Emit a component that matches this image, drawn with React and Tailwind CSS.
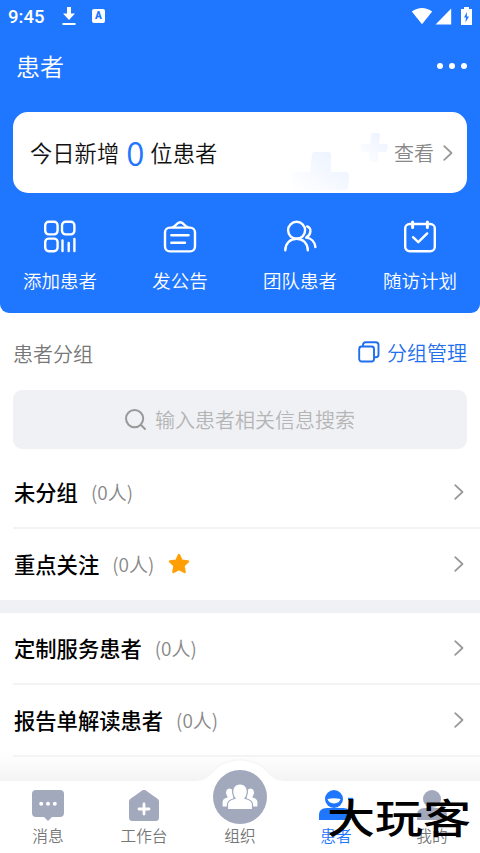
import React from 'react';

const groups = [
    { name: '未分组', count: 0 },
    { name: '重点关注', count: 0, starred: true },
];

const serviceGroups = [
    { name: '定制服务患者', count: 0 },
    { name: '报告单解读患者', count: 0 },
];

const Chevron = ({ className }) => (
    <svg width="12" height="18" viewBox="0 0 12 18" fill="none" stroke="currentColor" strokeWidth="1.8" strokeLinecap="round" strokeLinejoin="round" className={className}>
        <path d="M2.2 2.2L9.5 9L2.2 15.8" />
    </svg>
);

const QrIcon = () => (
    <svg width="34" height="34" viewBox="0 0 34 34" fill="none" stroke="white" strokeWidth="2.4" strokeLinecap="round">
        <rect x="2.2" y="1.8" width="12.4" height="12.6" rx="3.6" />
        <rect x="19" y="1.8" width="12.4" height="12.6" rx="3.6" />
        <rect x="2.2" y="18.6" width="12.4" height="12.6" rx="3.6" />
        <path d="M19.5 20.5V31M25.7 23V31M31.4 19V31" />
    </svg>
);

const NoticeIcon = () => (
    <svg width="34" height="34" viewBox="0 0 34 34" fill="none" stroke="white" strokeWidth="2.4" strokeLinecap="round" strokeLinejoin="round">
        <rect x="2" y="7.6" width="30" height="23.8" rx="4.8" />
        <path d="M10 7C13 6.6 13.5 2.2 17.2 2.2S21.4 6.6 24.4 7" />
        <path d="M8.3 15.3H25.6M8.3 22.8H22" />
    </svg>
);

const TeamIcon = () => (
    <svg width="34" height="34" viewBox="0 0 34 34" fill="none" stroke="white" strokeWidth="2.4" strokeLinecap="round" strokeLinejoin="round">
        <circle cx="13.6" cy="10.3" r="8.5" />
        <path d="M2.3 30.2C2.3 23.5 7 18.8 13.6 18.8S24.8 23.5 24.8 30.2" />
        <path d="M24.2 6.4C29 8.2 28.2 14.8 23.2 17.6C28.2 18.2 31.8 22 32.4 27" />
    </svg>
);

const PlanIcon = () => (
    <svg width="34" height="34" viewBox="0 0 34 34" fill="none" stroke="white" strokeWidth="2.4" strokeLinecap="round" strokeLinejoin="round">
        <rect x="2.2" y="4" width="29.6" height="27.2" rx="4.5" />
        <path d="M9.6 2V7.4M24.4 2V7.4" strokeWidth="3" />
        <path d="M10 17.2L15.3 22.2L24.2 13.4" />
    </svg>
);

const actions = [
    { label: '添加患者', icon: <QrIcon /> },
    { label: '发公告', icon: <NoticeIcon /> },
    { label: '团队患者', icon: <TeamIcon /> },
    { label: '随访计划', icon: <PlanIcon /> },
];

const StatusBar = () => (
    <div className="flex h-8 items-center justify-between pr-2 pl-2 text-white">
        <div className="flex items-center">
            <span className="w-[54px] pt-0.5 font-['Roboto',sans-serif] text-[18.5px] leading-none font-medium">9:45</span>
            <svg width="14" height="18" viewBox="0 0 14 18" fill="white">
                <path d="M5 0H9V6.5H13L7 13L1 6.5H5ZM0.5 16H13.5V18H0.5Z" />
            </svg>
            <span className="ml-4 flex h-[14px] w-[13px] items-center justify-center rounded-[2px] bg-white font-['Roboto',sans-serif] text-[10px] leading-none font-black text-[#1f76ff]">A</span>
        </div>
        <div className="flex items-center">
            <svg width="22" height="18" viewBox="0 0 22 18" fill="white">
                <path d="M0.8 4.6C7 -0.1 15 -0.1 21.2 4.6L11 17.2Z" />
            </svg>
            <svg width="17" height="18" viewBox="0 0 17 18" fill="white" className="ml-[2px]">
                <path d="M0.6 17.4L16.2 1.6V17.4Z" />
            </svg>
            <svg width="11" height="19" viewBox="0 0 11 19" className="ml-[9px]">
                <path d="M3 0H8V2H11V18H0V2H3Z" fill="white" />
                <path d="M6 5L3 10.5H5L4.4 15.5L8 9.4H5.8Z" fill="#1f76ff" />
            </svg>
        </div>
    </div>
);

const Header = () => (
    <header className="h-[313px] shrink-0 rounded-b-[9px] bg-[#1f76ff] text-white">
        <StatusBar />
        <div className="flex h-[68px] items-center justify-between pr-[13px] pl-4">
            <h1 className="text-[24px] leading-none font-[350]">患者</h1>
            <svg width="30" height="6" viewBox="0 0 30 6" fill="white">
                <circle cx="3" cy="3" r="3" />
                <circle cx="15" cy="3" r="3" />
                <circle cx="27" cy="3" r="3" />
            </svg>
        </div>
        <div className="relative mx-[13px] mt-3 flex h-[81px] items-center justify-between rounded-[15px] bg-white pr-[13px] pl-[17px]">
            <svg width="112" height="60" viewBox="0 0 112 60" className="absolute right-[79px] bottom-0">
                <defs>
                    <linearGradient id="cross" x1="1" y1="0" x2="0" y2="1">
                        <stop offset="0" stopColor="#eaf1ff" />
                        <stop offset="1" stopColor="#ffffff" />
                    </linearGradient>
                </defs>
                <path d="M36 22Q36 19 39 19H52Q55 19 55 22V39H70Q73 39 73 42L72 55Q72 57 69 57H16V39H34Z" fill="url(#cross)" />
                <path d="M95 1Q95 0 97 0H102Q104 0 104 2L103 11H110Q112 12 112 13L110 19H102V27Q102 29 100 29H95Q93 29 93 27V19H85V11H94Z" fill="url(#cross)" />
            </svg>
            <p className="relative flex items-center text-[22.3px] leading-none font-[350] whitespace-nowrap text-[#111]">
                今日新增
                <span className="mr-[6px] ml-[7px] text-[33px] leading-none font-[350] text-[#1f76ff]">0</span>
                位患者
            </p>
            <span className="relative flex items-center text-[20px] leading-none font-[350] text-[#888]">
                查看
                <Chevron className="ml-2 text-[#999]" />
            </span>
        </div>
        <div className="mt-[27px] grid grid-cols-4">
            {actions.map((action) => (
                <div key={action.label} className="flex flex-col items-center">
                    {action.icon}
                    <span className="mt-[17px] text-[18.5px] leading-none font-[350]">{action.label}</span>
                </div>
            ))}
        </div>
    </header>
);

const GroupRow = ({ group }) => (
    <li className="ml-[13px] flex h-[71.5px] items-center border-b-2 border-[#f3f3f5] pr-[15px] pl-px last:border-transparent">
        <span className="text-[21.3px] leading-none font-medium text-black">{group.name}</span>
        <span className="ml-[13px] flex items-center text-[19px] leading-none font-[350] text-[#888]">
            <span>(</span>
            <span>{group.count}</span>
            <span>人</span>
            <span>)</span>
        </span>
        {group.starred && (
            <svg width="22" height="22" viewBox="0 0 22 22" className="mt-0.5 ml-[14px]" fill="#ff9f05" stroke="#ff9f05" strokeWidth="2.4" strokeLinejoin="round">
                <path d="M11 2L13.7 7.7L20 8.4L15.5 12.7L16.6 19L11 16L5.4 19L6.5 12.7L2 8.4L8.3 7.7Z" />
            </svg>
        )}
        <Chevron className="mt-px ml-auto text-[#999]" />
    </li>
);

const MessageIcon = () => (
    <svg width="32" height="32" viewBox="0 0 32 32">
        <path d="M4 0H28Q32 0 32 4V23Q32 27 28 27H20L16 31L12 27H4Q0 27 0 23V4Q0 0 4 0Z" fill="#a2a9bd" />
        <circle cx="9.2" cy="13.8" r="2" fill="white" />
        <circle cx="16" cy="13.8" r="2" fill="white" />
        <circle cx="22.8" cy="13.8" r="2" fill="white" />
    </svg>
);

const WorkbenchIcon = () => (
    <svg width="32" height="32" viewBox="0 0 32 32">
        <path d="M14.5 0.2Q16 -0.8 17.5 0.2L29.5 8.8Q31 9.8 31 11.5V27.5Q31 31 27.5 31H4.5Q1 31 1 27.5V11.5Q1 9.8 2.5 8.8Z" fill="#a2a9bd" />
        <path d="M16 14V24M11 19H21" stroke="white" strokeWidth="2.8" strokeLinecap="round" />
    </svg>
);

const PatientIcon = () => (
    <svg width="34" height="32" viewBox="0 0 34 32">
        <path d="M0 30V25Q0 18 8 18H24Q32 18 32 25V30Z" fill="#1f76ff" />
        <circle cx="15" cy="9" r="9" fill="#1f76ff" />
        <path d="M8.5 9Q15 7.5 21.5 9Q20.5 13 15 13.5Q9.5 13 8.5 9Z" fill="white" />
        <path d="M29 8.8H34" stroke="#1f76ff" strokeWidth="2" />
    </svg>
);

const MineIcon = () => (
    <svg width="34" height="32" viewBox="0 0 34 32" fill="#a2a9bd">
        <circle cx="17" cy="9" r="9" />
        <path d="M2 30V25Q2 18 10 18H24Q32 18 32 25V30Z" />
    </svg>
);

const OrgIcon = () => (
    <svg width="54" height="54" viewBox="0 0 54 54" className="shrink-0">
        <circle cx="27" cy="27" r="27" fill="#a2a9bd" />
        <g fill="white" stroke="#a2a9bd" strokeWidth="1.2">
            <path d="M9 37V32Q9 28.5 14 27C9.5 20 16 15.5 20 19.5L22 37Z" />
            <path d="M45 37V32Q45 28.5 40 27C44.5 20 38 15.5 34 19.5L32 37Z" />
            <path d="M14.5 39.5V34Q15 30 22 28.5C17 21 20.5 14 27 14S37 21 32 28.5Q39 30 39.5 34V39.5Z" />
        </g>
    </svg>
);

const tabs = [
    { label: '消息', icon: <MessageIcon /> },
    { label: '工作台', icon: <WorkbenchIcon /> },
    { label: '组织', icon: <OrgIcon />, raised: true },
    { label: '患者', icon: <PatientIcon />, active: true },
    { label: '我的', icon: <MineIcon /> },
];

const TabBar = () => (
    <nav className="relative h-[72px] shrink-0 bg-white">
        {/* soft shade and the raised bump behind the middle tab */}
        <svg width="480" height="30" viewBox="0 0 480 30" className="absolute bottom-full left-0">
            <defs>
                <linearGradient id="shade" x1="0" y1="0" x2="0" y2="1">
                    <stop offset="0" stopColor="#f6f6f6" stopOpacity="0" />
                    <stop offset="1" stopColor="#f3f3f3" />
                </linearGradient>
            </defs>
            <rect width="480" height="30" fill="url(#shade)" />
            <path d="M196 30C207 30 210 24 216 18C230 6.5 250 6.5 264 18C270 24 273 30 284 30Z" fill="white" stroke="#f6f6f6" strokeWidth="3" />
            <path d="M196 30C207 30 210 24 216 18C230 6.5 250 6.5 264 18C270 24 273 30 284 30Z" fill="white" />
        </svg>
        <div className="relative grid h-full grid-cols-5 grid-rows-1">
            {tabs.map((tab) => (
                <div key={tab.label} className="flex min-h-0 flex-col items-center justify-end pb-[9px]">
                    {tab.icon}
                    <span className={`shrink-0 text-[15.7px] leading-none font-[350] ${tab.raised ? 'mt-[4px]' : 'mt-[6px]'} ${tab.active ? 'text-[#1f76ff]' : 'text-[#777]'}`}>{tab.label}</span>
                </div>
            ))}
        </div>
        <span className="absolute right-[9px] bottom-[17px] origin-bottom-right scale-y-[0.84] text-[48px] leading-none font-medium whitespace-nowrap text-black">大玩客</span>
    </nav>
);

export default function App() {
    return (
        <div className="flex h-[853px] w-[480px] flex-col overflow-hidden bg-white font-['Noto_Sans_CJK_SC',sans-serif]">
            <Header />
            <main className="min-h-0 flex-1 overflow-hidden">
                <div className="flex h-[77px] items-center justify-between px-[13px] text-[20px] leading-none font-[350]">
                    <h2 className="pt-1 text-[#777]">患者分组</h2>
                    <span className="flex items-center pt-0.5 text-[#1f6fee]">
                        <svg width="22" height="22" viewBox="0 0 22 22" fill="none" stroke="currentColor" strokeWidth="1.9" className="mr-[7px] mb-0.5">
                            <rect x="1.2" y="5.5" width="14.8" height="15" rx="2.5" />
                            <path d="M5 5.5V4Q5 1.2 7.8 1.2H17.7Q20.5 1.2 20.5 4V13.5Q20.5 16.3 17.7 16.3H16" />
                        </svg>
                        分组管理
                    </span>
                </div>
                <div className="mx-[13px] flex h-[59px] items-center justify-center rounded-[9px] bg-[#f0f1f5] text-[20px] leading-none font-[350] text-[#b5b5b5]">
                    <svg width="22" height="22" viewBox="0 0 22 22" fill="none" stroke="#999" strokeWidth="2" strokeLinecap="round" className="mr-2">
                        <circle cx="9.6" cy="9.6" r="8.6" />
                        <path d="M16 16L20 20" />
                    </svg>
                    输入患者相关信息搜索
                </div>
                <ul className="mt-2">
                    {groups.map((group) => <GroupRow key={group.name} group={group} />)}
                </ul>
                <div className="h-[13px] bg-[#f0f1f5]" />
                <ul>
                    {serviceGroups.map((group) => <GroupRow key={group.name} group={group} />)}
                </ul>
                <div className="-mt-px ml-[13px] h-0.5 bg-[#f3f3f5]" />
            </main>
            <TabBar />
        </div>
    );
}
